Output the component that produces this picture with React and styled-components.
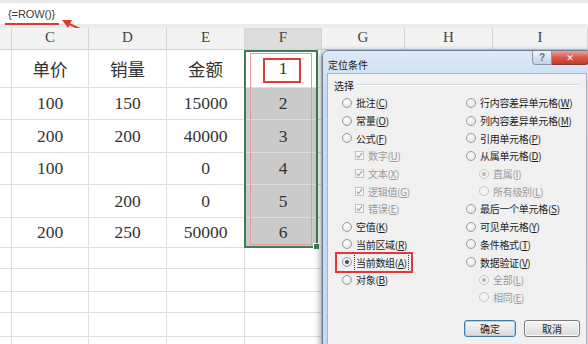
import React from 'react';
import styled, { createGlobalStyle } from 'styled-components';

const GlobalStyle = createGlobalStyle`
  html, body {
    margin: 0;
    padding: 0;
    background: #ffffff;
    overflow: hidden;
  }
`;

const cjk = `"Noto Sans CJK SC", "Liberation Sans", sans-serif`;

const rows = [
  ['单价', '销量', '金额', '1'],
  ['100', '150', '15000', '2'],
  ['200', '200', '40000', '3'],
  ['100', '', '0', '4'],
  ['', '200', '0', '5'],
  ['200', '250', '50000', '6'],
];

const rowHeights = [38, 32, 33, 32, 33, 30, 21, 23, 21, 24, 22];
const letters = ['', 'C', 'D', 'E', 'F', 'G', 'H', 'I'];

const leftOptions = [
  { type: 'radio', text: '批注', key: 'C' },
  { type: 'radio', text: '常量', key: 'O' },
  { type: 'radio', text: '公式', key: 'F' },
  { type: 'check', text: '数字', key: 'U', sub: true },
  { type: 'check', text: '文本', key: 'X', sub: true },
  { type: 'check', text: '逻辑值', key: 'G', sub: true },
  { type: 'check', text: '错误', key: 'E', sub: true },
  { type: 'radio', text: '空值', key: 'K' },
  { type: 'radio', text: '当前区域', key: 'R' },
  { type: 'radio', text: '当前数组', key: 'A', checked: true, focus: true },
  { type: 'radio', text: '对象', key: 'B' },
];

const rightOptions = [
  { type: 'radio', text: '行内容差异单元格', key: 'W' },
  { type: 'radio', text: '列内容差异单元格', key: 'M' },
  { type: 'radio', text: '引用单元格', key: 'P' },
  { type: 'radio', text: '从属单元格', key: 'D' },
  { type: 'radio', text: '直属', key: 'I', sub: true, checked: true },
  { type: 'radio', text: '所有级别', key: 'L', sub: true },
  { type: 'radio', text: '最后一个单元格', key: 'S' },
  { type: 'radio', text: '可见单元格', key: 'Y' },
  { type: 'radio', text: '条件格式', key: 'T' },
  { type: 'radio', text: '数据验证', key: 'V' },
  { type: 'radio', text: '全部', key: 'L', sub: true, checked: true },
  { type: 'radio', text: '相同', key: 'E', sub: true },
];

function Option({ opt }) {
  const disabled = !!opt.sub;
  return (
    <OptionRow $sub={opt.sub}>
      {opt.type === 'radio' ? (
        <Radio $disabled={disabled} $checked={opt.checked} />
      ) : (
        <CheckBox>
          <svg width="9" height="9" viewBox="0 0 9 9">
            <polyline points="1.8,4.6 3.6,6.6 7.2,1.8" fill="none" stroke="#a0a0a0" strokeWidth="1.1" />
          </svg>
        </CheckBox>
      )}
      <OptionLabel $disabled={disabled} $focus={opt.focus}>
        {opt.text}(<u>{opt.key}</u>)
      </OptionLabel>
    </OptionRow>
  );
}

export default function App() {
  return (
    <>
      <GlobalStyle />
      <Page>
        <FormulaBar>
          <FormulaText>{'{=ROW()}'}</FormulaText>
          <Underline />
          <Arrow width="40" height="20" viewBox="0 0 40 20">
            <line x1="30" y1="16" x2="8" y2="6" stroke="#e03a2f" strokeWidth="2" />
            <polygon points="3,3 13,3 9,11" fill="#e03a2f" />
          </Arrow>
        </FormulaBar>
        <Sheet>
          <Grid>
            {letters.map((l, i) => (
              <HeaderCell key={'h' + i} $active={l === 'F'}>{l}</HeaderCell>
            ))}
            {rowHeights.map((h, r) =>
              letters.map((l, c) => {
                const value = r < rows.length && c >= 1 && c <= 4 ? rows[r][c - 1] : '';
                const selected = c === 4 && r >= 1 && r < rows.length;
                return (
                  <Cell key={r + '-' + c} $selected={selected}>
                    {value}
                  </Cell>
                );
              })
            )}
          </Grid>
          <Selection>
            <FillHandle />
          </Selection>
          <ArrayOutline />
          <MarkBox />
        </Sheet>

        <Dialog>
          <TitleBar>
            <Title>定位条件</Title>
            <Controls>
              <HelpButton>?</HelpButton>
              <CloseButton>✕</CloseButton>
            </Controls>
          </TitleBar>
          <Client>
            <GroupHeader>
              <span>选择</span>
              <GroupLine />
            </GroupHeader>
            <Options>
              <Column>
                {leftOptions.map((o, i) => (
                  <Option key={i} opt={o} />
                ))}
              </Column>
              <Column>
                {rightOptions.map((o, i) => (
                  <Option key={i} opt={o} />
                ))}
              </Column>
            </Options>
            <HighlightBox />
            <ButtonRow>
              <DialogButton $default>确定</DialogButton>
              <DialogButton>取消</DialogButton>
            </ButtonRow>
          </Client>
        </Dialog>
      </Page>
    </>
  );
}

const Page = styled.div`
  position: relative;
  width: 588px;
  height: 344px;
  overflow: hidden;
  background: #fff;
`;

const FormulaBar = styled.div`
  position: relative;
  height: 21px;
  border-top: 3px solid #e9e9e9;
  border-bottom: 4px solid #ececec;
  background: #fff;
  display: flex;
  align-items: center;
  padding-left: 8px;
`;

const FormulaText = styled.span`
  font-family: "Liberation Sans", Arial, sans-serif;
  font-size: 11px;
  color: #3a3a3a;
  letter-spacing: -0.1px;
`;

const Underline = styled.div`
  position: absolute;
  left: 5px;
  top: 20px;
  width: 54px;
  height: 2px;
  background: #e03a2f;
`;

const Arrow = styled.svg`
  position: absolute;
  left: 59px;
  top: 14px;
`;

const Sheet = styled.div`
  position: relative;
`;

const Grid = styled.div`
  display: grid;
  grid-template-columns: 12px 77px 78px 78px 77px 83px 88px 95px;
  grid-template-rows: 22px ${rowHeights.map((h) => h + 'px').join(' ')};
`;

const HeaderCell = styled.div`
  box-sizing: border-box;
  border-right: 1px solid #d4d4d4;
  border-bottom: 1px solid #cfcfcf;
  background: ${(p) => (p.$active ? '#dcdcdc' : '#f3f3f3')};
  display: flex;
  align-items: center;
  justify-content: center;
  font-family: "Liberation Serif", "DejaVu Serif", serif;
  font-size: 15px;
  color: #444;
  padding-bottom: 2px;
`;

const Cell = styled.div`
  box-sizing: border-box;
  border-right: 1px solid #dedede;
  border-bottom: 1px solid #dedede;
  background: ${(p) =>
    p.$selected ? 'linear-gradient(90deg, #cacaca 0 72px, #ffffff 72px)' : '#fff'};
  display: flex;
  align-items: center;
  justify-content: center;
  font-family: "Liberation Serif", ${cjk};
  font-size: 17.5px;
  color: #333;
`;

const Selection = styled.div`
  position: absolute;
  left: 244px;
  top: 22px;
  width: 74px;
  height: 198px;
  box-sizing: border-box;
  border: 2px solid #3f7d58;
`;

const FillHandle = styled.div`
  position: absolute;
  right: -4px;
  bottom: -4px;
  width: 5px;
  height: 5px;
  background: #3f7d58;
  border: 1px solid #fff;
`;

const ArrayOutline = styled.div`
  position: absolute;
  left: 250px;
  top: 25px;
  width: 62px;
  height: 192px;
  box-sizing: border-box;
  border: 1px solid #e49a9a;
`;

const MarkBox = styled.div`
  position: absolute;
  left: 263px;
  top: 30px;
  width: 38px;
  height: 25px;
  box-sizing: border-box;
  border: 2px solid #e0393a;
`;

const Dialog = styled.div`
  position: absolute;
  left: 322px;
  top: 50px;
  width: 270px;
  height: 310px;
  box-sizing: border-box;
  border: 1px solid #6c7f99;
  border-radius: 6px 6px 0 0;
  background: linear-gradient(180deg, #dde9f7 0%, #c9dbf0 40px, #c6d8ee 100%);
  box-shadow: -2px 1px 6px rgba(0, 0, 0, 0.35);
  display: flex;
  flex-direction: column;
`;

const TitleBar = styled.div`
  height: 22px;
  display: flex;
  align-items: flex-start;
  justify-content: space-between;
`;

const Title = styled.span`
  font-family: ${cjk};
  font-size: 10px;
  color: #1b1b1b;
  margin: 6px 0 0 5px;
`;

const Controls = styled.div`
  display: flex;
  margin-right: 2px;
`;

const HelpButton = styled.div`
  width: 20px;
  height: 14px;
  box-sizing: border-box;
  border: 1px solid #8797ab;
  border-top: none;
  border-radius: 0 0 0 4px;
  background: linear-gradient(180deg, #eef3f9, #c3d2e4);
  font-family: "Liberation Sans", sans-serif;
  font-size: 10px;
  font-weight: bold;
  color: #5d6f86;
  display: flex;
  align-items: center;
  justify-content: center;
`;

const CloseButton = styled.div`
  width: 37px;
  height: 14px;
  box-sizing: border-box;
  border: 1px solid #8c3a30;
  border-top: none;
  border-left: none;
  border-radius: 0 0 4px 0;
  background: linear-gradient(180deg, #eaa396 0%, #d65a49 50%, #c33b28 100%);
  color: #fff;
  font-family: "DejaVu Sans", sans-serif;
  font-size: 9px;
  font-weight: bold;
  display: flex;
  align-items: center;
  justify-content: center;
`;

const Client = styled.div`
  position: relative;
  flex: 1;
  margin: 0 4px 0 4px;
  border: 1px solid #a6b5c8;
  background: #f0f0f0;
  padding: 5px 6px 0 6px;
`;

const GroupHeader = styled.div`
  display: flex;
  align-items: center;
  gap: 3px;
  height: 12px;
  font-family: ${cjk};
  font-size: 10px;
  color: #1e1e1e;
`;

const GroupLine = styled.div`
  flex: 1;
  height: 1px;
  background: #d5dbe2;
  border-bottom: 1px solid #fff;
`;

const Options = styled.div`
  display: grid;
  grid-template-columns: 124px 1fr;
  margin-top: 3px;
  padding-left: 8px;
`;

const Column = styled.div`
  display: flex;
  flex-direction: column;
`;

const OptionRow = styled.div`
  height: 17.7px;
  display: flex;
  align-items: center;
  gap: 4px;
  padding-left: ${(p) => (p.$sub ? '13px' : '0')};
`;

const Radio = styled.span`
  position: relative;
  width: 8px;
  height: 8px;
  flex-shrink: 0;
  border-radius: 50%;
  border: 1px solid ${(p) => (p.$disabled ? '#c9c9c9' : '#9a9c9e')};
  background: ${(p) =>
    p.$disabled ? '#f4f4f4' : 'radial-gradient(circle at 40% 35%, #ffffff, #d9dcdf)'};
  &::after {
    content: '';
    display: ${(p) => (p.$checked ? 'block' : 'none')};
    position: absolute;
    left: 2px;
    top: 2px;
    width: 4px;
    height: 4px;
    border-radius: 50%;
    background: ${(p) => (p.$disabled ? '#b5b5b5' : '#2d4a63')};
  }
`;

const CheckBox = styled.span`
  width: 9px;
  height: 9px;
  flex-shrink: 0;
  box-sizing: border-box;
  border: 1px solid #c2c2c2;
  background: #f7f7f7;
  display: flex;
  svg {
    margin: -1px;
  }
`;

const OptionLabel = styled.span`
  font-family: ${cjk};
  font-size: 10px;
  letter-spacing: -0.3px;
  color: ${(p) => (p.$disabled ? '#9a9a9a' : '#1e1e1e')};
  outline: ${(p) => (p.$focus ? '1px dotted #333' : 'none')};
  outline-offset: 1px;
  white-space: nowrap;
`;

const HighlightBox = styled.div`
  position: absolute;
  left: 7px;
  top: 178px;
  width: 78px;
  height: 21px;
  box-sizing: border-box;
  border: 2px solid #e0393a;
`;

const ButtonRow = styled.div`
  display: flex;
  gap: 8px;
  padding-left: 130px;
  margin-top: 14px;
`;

const DialogButton = styled.div`
  width: ${(p) => (p.$default ? '54px' : '58px')};
  height: 17px;
  box-sizing: border-box;
  border: 1px solid ${(p) => (p.$default ? '#3d7bad' : '#7a7a7a')};
  border-radius: 3px;
  background: linear-gradient(180deg, #f6f6f6 0%, #e8e8e8 50%, #d8d8d8 100%);
  box-shadow: ${(p) => (p.$default ? 'inset 0 0 0 1px #a9d4f2' : 'inset 0 0 0 1px #fbfbfb')};
  font-family: ${cjk};
  font-size: 10px;
  color: #1e1e1e;
  display: flex;
  align-items: center;
  justify-content: center;
`;
